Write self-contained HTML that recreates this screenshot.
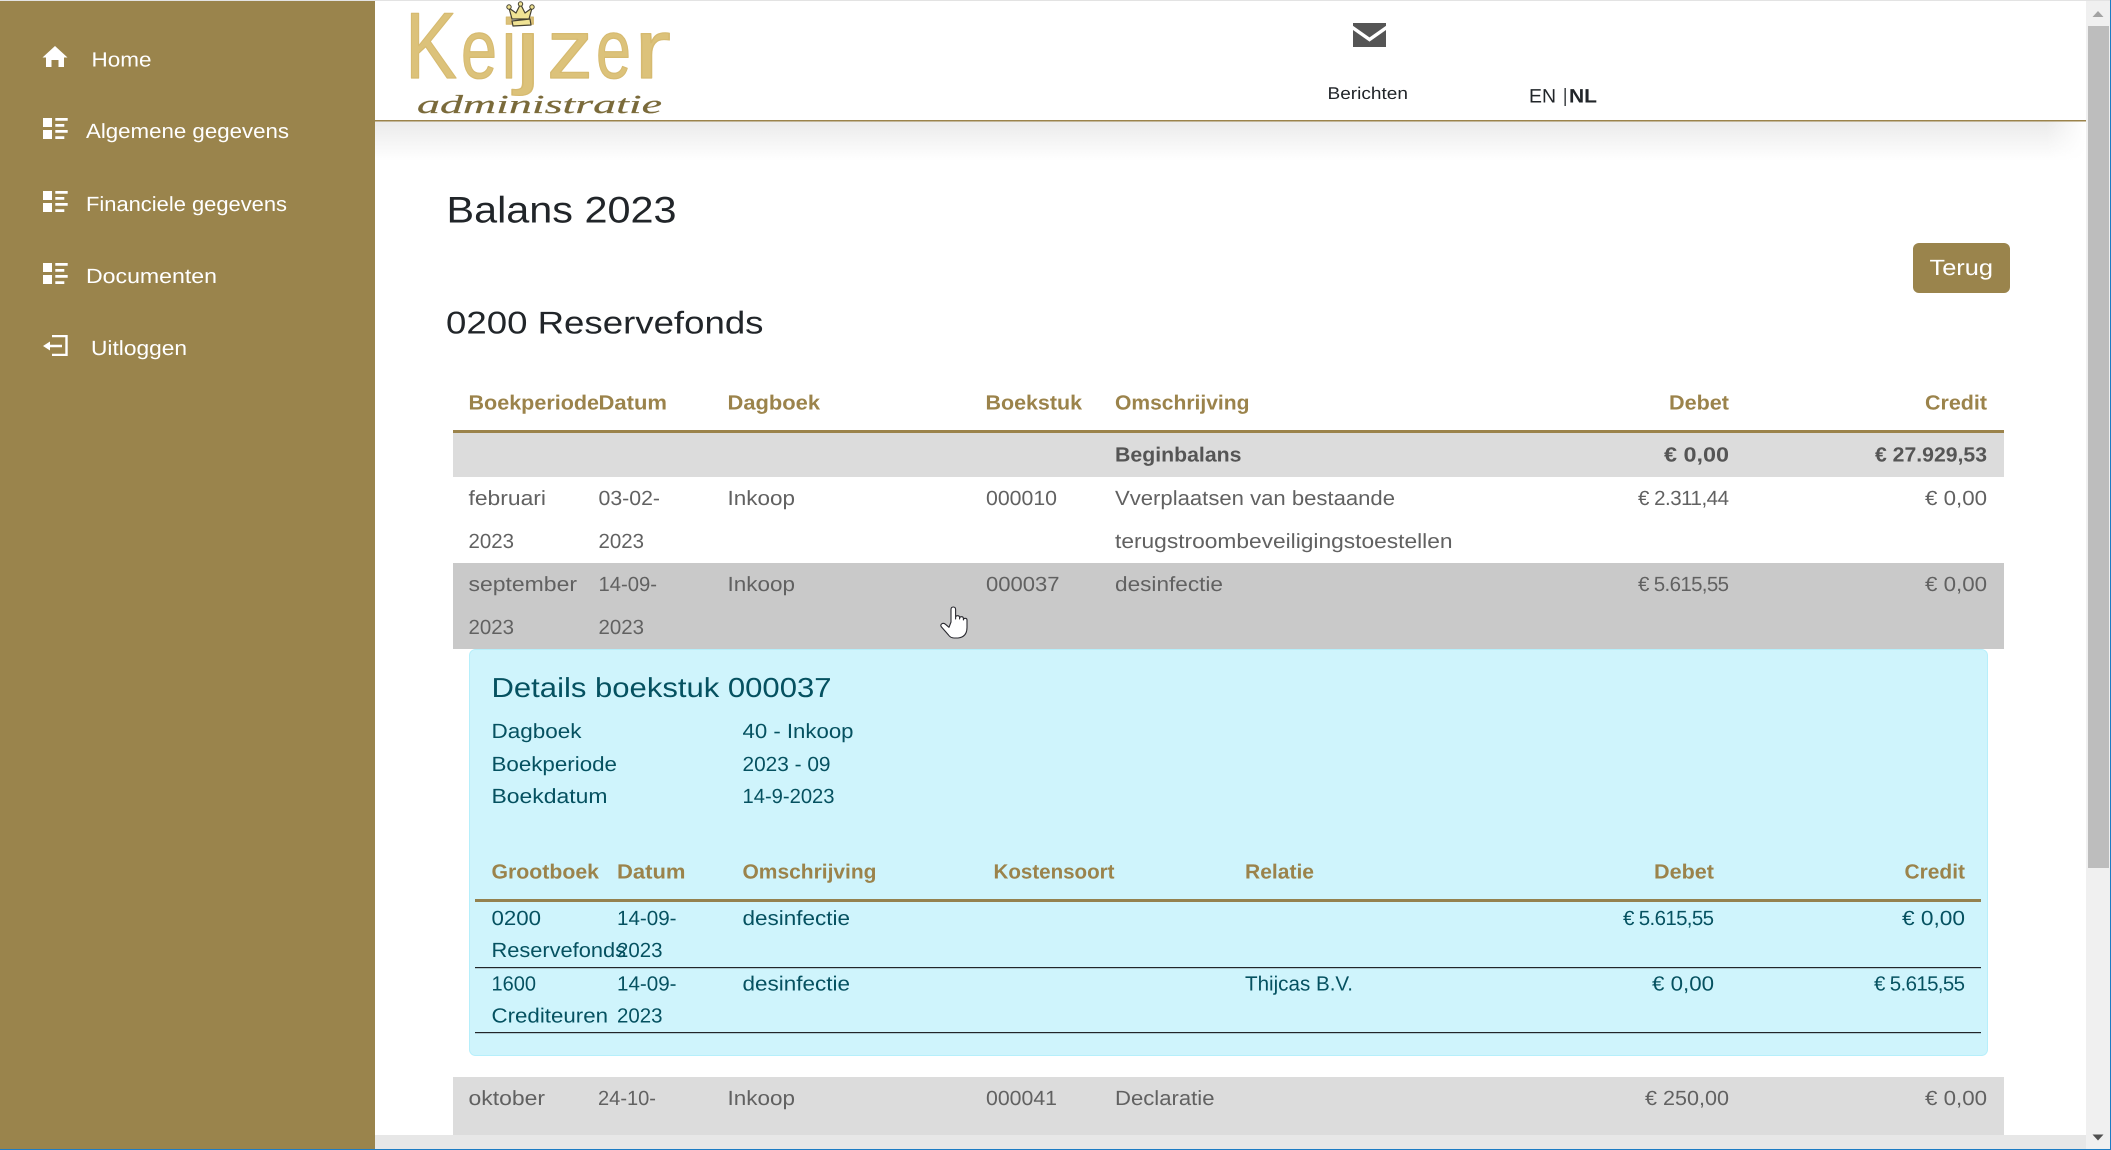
<!DOCTYPE html>
<html lang="nl">
<head>
<meta charset="utf-8">
<title>Balans 2023</title>
<style>
html,body{margin:0;padding:0;width:2111px;height:1150px;overflow:hidden;background:#fff}
svg{display:block;position:absolute;left:0;top:0}
text{font-family:"Liberation Sans",sans-serif;font-size:20.5px;text-rendering:geometricPrecision}
.s{fill:#fff}
.h{fill:#9b834b;font-weight:700}
.t{fill:#616161}
.b{fill:#555;font-weight:700}
.i{fill:#055160}
.e{text-anchor:end}
</style>
</head>
<body>
<svg width="2111" height="1150" viewBox="0 0 2111 1150" xmlns="http://www.w3.org/2000/svg">
<defs>
<linearGradient id="sh" x1="0" y1="0" x2="0" y2="1"><stop offset="0" stop-color="#eaeaea"/><stop offset="1" stop-color="#fff"/></linearGradient>
<linearGradient id="shr" x1="0" y1="0" x2="1" y2="0"><stop offset="0" stop-color="#fff" stop-opacity="0"/><stop offset="1" stop-color="#fff"/></linearGradient>
</defs>
<rect width="2111" height="1150" fill="#fff"/>
<!-- sidebar -->
<rect x="0" y="1" width="375" height="1148" fill="#9a844c"/>
<path fill="#fff" d="M55 46 L67.5 57.5 L64 57.5 L64 67 L58.5 67 L58.5 60 L51.5 60 L51.5 67 L46 67 L46 57.5 L42.5 57.5 Z"/>
<path fill="#fff" d="M43 118h9v9h-9zM43 130h9v9h-9zM55.300 118h12.400v2.800h-12.400zM55.300 124h9v2.800h-9zM55.300 130h12.400v2.800h-12.400zM55.300 136.200h9v2.800h-9z"/>
<path fill="#fff" transform="translate(0,73)" d="M43 118h9v9h-9zM43 130h9v9h-9zM55.300 118h12.400v2.800h-12.400zM55.300 124h9v2.800h-9zM55.300 130h12.400v2.800h-12.400zM55.300 136.200h9v2.800h-9z"/>
<path fill="#fff" transform="translate(0,145)" d="M43 118h9v9h-9zM43 130h9v9h-9zM55.300 118h12.400v2.800h-12.400zM55.300 124h9v2.800h-9zM55.300 130h12.400v2.800h-12.400zM55.300 136.200h9v2.800h-9z"/>
<path fill="#fff" d="M52 335h15.700v21H52v-2.300h13.300v-16.400H52zM43 346l7-4.500v3.300h12v2.400H50v3.300z"/>
<text class="s" x="91.500" y="66.300" textLength="60" lengthAdjust="spacingAndGlyphs">Home</text>
<text class="s" x="86" y="138" textLength="203" lengthAdjust="spacingAndGlyphs">Algemene gegevens</text>
<text class="s" x="86" y="211" textLength="201" lengthAdjust="spacingAndGlyphs">Financiele gegevens</text>
<text class="s" x="86" y="283" textLength="131" lengthAdjust="spacingAndGlyphs">Documenten</text>
<text class="s" x="91" y="355" textLength="96" lengthAdjust="spacingAndGlyphs">Uitloggen</text>
<!-- header -->
<rect x="375" y="121" width="1711" height="40" fill="url(#sh)"/>
<rect x="2046" y="121" width="40" height="40" fill="url(#shr)"/>
<rect x="375" y="120" width="1711" height="1.500" fill="#9b834b"/>
<!-- logo -->
<text y="78" fill="#dcc27a" stroke="#d6ba70" stroke-width="1.200" stroke-linejoin="round" style="font-size:84px"><tspan x="405" textLength="52" lengthAdjust="spacingAndGlyphs" style="font-size:94px">K</tspan><tspan x="461" textLength="36" lengthAdjust="spacingAndGlyphs">e</tspan><tspan x="502" textLength="14" lengthAdjust="spacingAndGlyphs">i</tspan><tspan x="515" textLength="26" lengthAdjust="spacingAndGlyphs">j</tspan><tspan x="547" textLength="46" lengthAdjust="spacingAndGlyphs">z</tspan><tspan x="596" textLength="35" lengthAdjust="spacingAndGlyphs">e</tspan><tspan x="634" textLength="37" lengthAdjust="spacingAndGlyphs">r</tspan></text>
<text x="417" y="113" textLength="245" lengthAdjust="spacingAndGlyphs" fill="#7a6a3a" stroke="#7a6a3a" stroke-width=".2" style="font-family:'Liberation Serif',serif;font-style:italic;font-size:26px">administratie</text>
<path d="M512 19L509 8 516 13 520.500 4 525 13 532 8 529 19z" fill="#f0e394" stroke="#444030" stroke-width="1.200" stroke-linejoin="round"/>
<circle cx="509" cy="7" r="2.200" fill="#f0e394" stroke="#444030"/>
<circle cx="520.500" cy="4" r="2.200" fill="#f0e394" stroke="#444030"/>
<circle cx="532" cy="7" r="2.200" fill="#f0e394" stroke="#444030"/>
<path d="M512 21L530 19 531 25 513 26z" fill="#f0e394" stroke="#444030" stroke-width="1.200" stroke-linejoin="round"/>
<!-- mail -->
<rect x="1353" y="23" width="33" height="24" fill="#555"/>
<path d="M1351 26.500L1369.500 39.500 1388 26.500" fill="none" stroke="#fff" stroke-width="3.500"/>
<text x="1327.500" y="99" textLength="80.500" lengthAdjust="spacingAndGlyphs" fill="#212529" style="font-size:17px">Berichten</text>
<text x="1529" y="102.700" textLength="27" lengthAdjust="spacingAndGlyphs" fill="#212529" style="font-size:19.500px">EN</text>
<rect x="1564.500" y="88" width="1.300" height="18" fill="#212529"/>
<text x="1569" y="102.700" textLength="28" lengthAdjust="spacingAndGlyphs" fill="#212529" style="font-size:19.500px;font-weight:700">NL</text>
<!-- headings -->
<text x="446.500" y="222.700" textLength="230" lengthAdjust="spacingAndGlyphs" fill="#212529" style="font-size:37px">Balans 2023</text>
<text x="446" y="333.300" textLength="317.500" lengthAdjust="spacingAndGlyphs" fill="#212529" style="font-size:31.500px">0200 Reservefonds</text>
<rect x="1913" y="243" width="97" height="50" rx="6" fill="#9a844c"/>
<text x="1929.500" y="275" textLength="63.500" lengthAdjust="spacingAndGlyphs" fill="#fff" style="font-size:22px">Terug</text>
<!-- main table -->
<text class="h" x="468.500" y="409.500" textLength="130.500" lengthAdjust="spacingAndGlyphs">Boekperiode</text>
<text class="h" x="598.500" y="409.500" textLength="68.500" lengthAdjust="spacingAndGlyphs">Datum</text>
<text class="h" x="727.500" y="409.500" textLength="92.500" lengthAdjust="spacingAndGlyphs">Dagboek</text>
<text class="h" x="985.500" y="409.500" textLength="96.500" lengthAdjust="spacingAndGlyphs">Boekstuk</text>
<text class="h" x="1115" y="409.500" textLength="134.500" lengthAdjust="spacingAndGlyphs">Omschrijving</text>
<text class="h e" x="1729" y="409.500" textLength="60" lengthAdjust="spacingAndGlyphs">Debet</text>
<text class="h e" x="1987" y="409.500" textLength="62" lengthAdjust="spacingAndGlyphs">Credit</text>
<rect x="453" y="430" width="1551" height="3" fill="#9b834b"/>
<rect x="453" y="433" width="1551" height="44" fill="#dcdcdc"/>
<text class="b" x="1115" y="461.500" textLength="126.500" lengthAdjust="spacingAndGlyphs">Beginbalans</text>
<text class="b e" x="1729" y="461.500" textLength="65" lengthAdjust="spacingAndGlyphs">€ 0,00</text>
<text class="b e" x="1987" y="461.500" textLength="112" lengthAdjust="spacingAndGlyphs">€ 27.929,53</text>
<text class="t" x="468.500" y="505" textLength="77.500" lengthAdjust="spacingAndGlyphs">februari</text>
<text class="t" x="468.500" y="548" textLength="45.500" lengthAdjust="spacingAndGlyphs">2023</text>
<text class="t" x="598.500" y="505" textLength="61.500" lengthAdjust="spacingAndGlyphs">03-02-</text>
<text class="t" x="598.500" y="548" textLength="45.500" lengthAdjust="spacingAndGlyphs">2023</text>
<text class="t" x="727.500" y="505" textLength="67.500" lengthAdjust="spacingAndGlyphs">Inkoop</text>
<text class="t" x="986" y="505" textLength="71" lengthAdjust="spacingAndGlyphs">000010</text>
<text class="t" x="1115" y="505" textLength="280" lengthAdjust="spacingAndGlyphs">Vverplaatsen van bestaande</text>
<text class="t" x="1115" y="548" textLength="337.500" lengthAdjust="spacingAndGlyphs">terugstroombeveiligingstoestellen</text>
<text class="t e" x="1729" y="505" textLength="91" lengthAdjust="spacing">€ 2.311,44</text>
<text class="t e" x="1987" y="505" textLength="62" lengthAdjust="spacingAndGlyphs">€ 0,00</text>
<rect x="453" y="563" width="1551" height="86" fill="#c9c9c9"/>
<text class="t" x="468.500" y="591" textLength="108.500" lengthAdjust="spacingAndGlyphs">september</text>
<text class="t" x="468.500" y="634" textLength="45.500" lengthAdjust="spacingAndGlyphs">2023</text>
<text class="t" x="598.500" y="591" textLength="58.500" lengthAdjust="spacingAndGlyphs">14-09-</text>
<text class="t" x="598.500" y="634" textLength="45.500" lengthAdjust="spacingAndGlyphs">2023</text>
<text class="t" x="727.500" y="591" textLength="67.500" lengthAdjust="spacingAndGlyphs">Inkoop</text>
<text class="t" x="986" y="591" textLength="73.500" lengthAdjust="spacingAndGlyphs">000037</text>
<text class="t" x="1115" y="591" textLength="108" lengthAdjust="spacingAndGlyphs">desinfectie</text>
<text class="t e" x="1729" y="591" textLength="91" lengthAdjust="spacing">€ 5.615,55</text>
<text class="t e" x="1987" y="591" textLength="62" lengthAdjust="spacingAndGlyphs">€ 0,00</text>
<!-- details panel -->
<rect x="469.500" y="649.500" width="1518" height="406" rx="6" fill="#cff4fc" stroke="#b6effb"/>
<text class="i" x="491.500" y="697" textLength="340" lengthAdjust="spacingAndGlyphs" style="font-size:27.500px">Details boekstuk 000037</text>
<text class="i" x="491.500" y="738" textLength="90" lengthAdjust="spacingAndGlyphs">Dagboek</text>
<text class="i" x="742.500" y="738" textLength="111" lengthAdjust="spacingAndGlyphs">40 - Inkoop</text>
<text class="i" x="491.500" y="771" textLength="125.500" lengthAdjust="spacingAndGlyphs">Boekperiode</text>
<text class="i" x="742.500" y="771" textLength="88" lengthAdjust="spacingAndGlyphs">2023 - 09</text>
<text class="i" x="491.500" y="803" textLength="116" lengthAdjust="spacingAndGlyphs">Boekdatum</text>
<text class="i" x="742.500" y="803" textLength="92" lengthAdjust="spacingAndGlyphs">14-9-2023</text>
<text class="h" x="491.500" y="878.300" textLength="107.500" lengthAdjust="spacingAndGlyphs">Grootboek</text>
<text class="h" x="617" y="878.300" textLength="68.500" lengthAdjust="spacingAndGlyphs">Datum</text>
<text class="h" x="742.500" y="878.300" textLength="134" lengthAdjust="spacingAndGlyphs">Omschrijving</text>
<text class="h" x="993.500" y="878.300" textLength="121" lengthAdjust="spacingAndGlyphs">Kostensoort</text>
<text class="h" x="1245" y="878.300" textLength="69" lengthAdjust="spacingAndGlyphs">Relatie</text>
<text class="h e" x="1714" y="878.300" textLength="60" lengthAdjust="spacingAndGlyphs">Debet</text>
<text class="h e" x="1965" y="878.300" textLength="60.500" lengthAdjust="spacingAndGlyphs">Credit</text>
<rect x="475" y="899" width="1506" height="3" fill="#94814f"/>
<text class="i" x="491.500" y="925" textLength="49.500" lengthAdjust="spacingAndGlyphs">0200</text>
<text class="i" x="491.500" y="957" textLength="134.500" lengthAdjust="spacingAndGlyphs">Reservefonds</text>
<text class="i" x="617" y="925" textLength="59.500" lengthAdjust="spacingAndGlyphs">14-09-</text>
<text class="i" x="617" y="957" textLength="45.500" lengthAdjust="spacingAndGlyphs">2023</text>
<text class="i" x="742.500" y="925" textLength="107.500" lengthAdjust="spacingAndGlyphs">desinfectie</text>
<text class="i e" x="1714" y="925" textLength="91" lengthAdjust="spacing">€ 5.615,55</text>
<text class="i e" x="1965" y="925" textLength="63" lengthAdjust="spacingAndGlyphs">€ 0,00</text>
<rect x="475" y="967" width="1506" height="1.200" fill="#212529"/>
<text class="i" x="491.500" y="990.700" textLength="44.500" lengthAdjust="spacingAndGlyphs">1600</text>
<text class="i" x="491.500" y="1022.700" textLength="116.500" lengthAdjust="spacingAndGlyphs">Crediteuren</text>
<text class="i" x="617" y="990.700" textLength="59.500" lengthAdjust="spacingAndGlyphs">14-09-</text>
<text class="i" x="617" y="1022.700" textLength="45.500" lengthAdjust="spacingAndGlyphs">2023</text>
<text class="i" x="742.500" y="990.700" textLength="107.500" lengthAdjust="spacingAndGlyphs">desinfectie</text>
<text class="i" x="1245" y="990.700" textLength="108" lengthAdjust="spacingAndGlyphs">Thijcas B.V.</text>
<text class="i e" x="1714" y="990.700" textLength="62" lengthAdjust="spacingAndGlyphs">€ 0,00</text>
<text class="i e" x="1965" y="990.700" textLength="91" lengthAdjust="spacing">€ 5.615,55</text>
<rect x="475" y="1032" width="1506" height="1.200" fill="#212529"/>
<!-- oktober row -->
<rect x="453" y="1077" width="1551" height="58" fill="#dcdcdc"/>
<text class="t" x="468.500" y="1105" textLength="76.500" lengthAdjust="spacingAndGlyphs">oktober</text>
<text class="t" x="598" y="1105" textLength="58" lengthAdjust="spacingAndGlyphs">24-10-</text>
<text class="t" x="727.500" y="1105" textLength="67.500" lengthAdjust="spacingAndGlyphs">Inkoop</text>
<text class="t" x="986" y="1105" textLength="71" lengthAdjust="spacingAndGlyphs">000041</text>
<text class="t" x="1115" y="1105" textLength="99.500" lengthAdjust="spacingAndGlyphs">Declaratie</text>
<text class="t e" x="1729" y="1105" textLength="84" lengthAdjust="spacingAndGlyphs">€ 250,00</text>
<text class="t e" x="1987" y="1105" textLength="62" lengthAdjust="spacingAndGlyphs">€ 0,00</text>
<!-- hand cursor -->
<path d="M951 622V609.500q0-2.500 2.300-2.500t2.300 2.500V619l0-1.500q0-1.800 2-1.800t2 1.800v1.500-.5q0-1.800 1.900-1.800t1.900 1.800v1.500q0-1.700 1.800-1.700t1.800 1.700v7.500q0 9.500-9 10.500h-4q-3.500 0-5.500-3l-7-8q-1.500-2 .3-3.200t3.700.5l3.500 3z" fill="#fff" stroke="#2a2a30" stroke-width="1.100" stroke-linejoin="round"/>
<!-- scrollbars -->
<rect x="375" y="1135" width="1711" height="14" fill="#e7e7e7"/>
<rect x="2086" y="1" width="24" height="1148" fill="#f0f0f0"/>
<rect x="2088" y="26" width="21" height="842" fill="#bdbdbd"/>
<path d="M2098 11l5.500 6h-11z" fill="#a3a3a3"/>
<path d="M2092.500 1134.500h11l-5.500 6z" fill="#505050"/>
<!-- window frame -->
<rect x="0" y="0" width="2111" height="1" fill="#e3e3e3"/>
<rect x="0" y="1149" width="2111" height="1" fill="#1d7cc4"/>
<rect x="2110" y="0" width="1" height="1150" fill="#1d7cc4"/>
</svg>
</body>
</html>
